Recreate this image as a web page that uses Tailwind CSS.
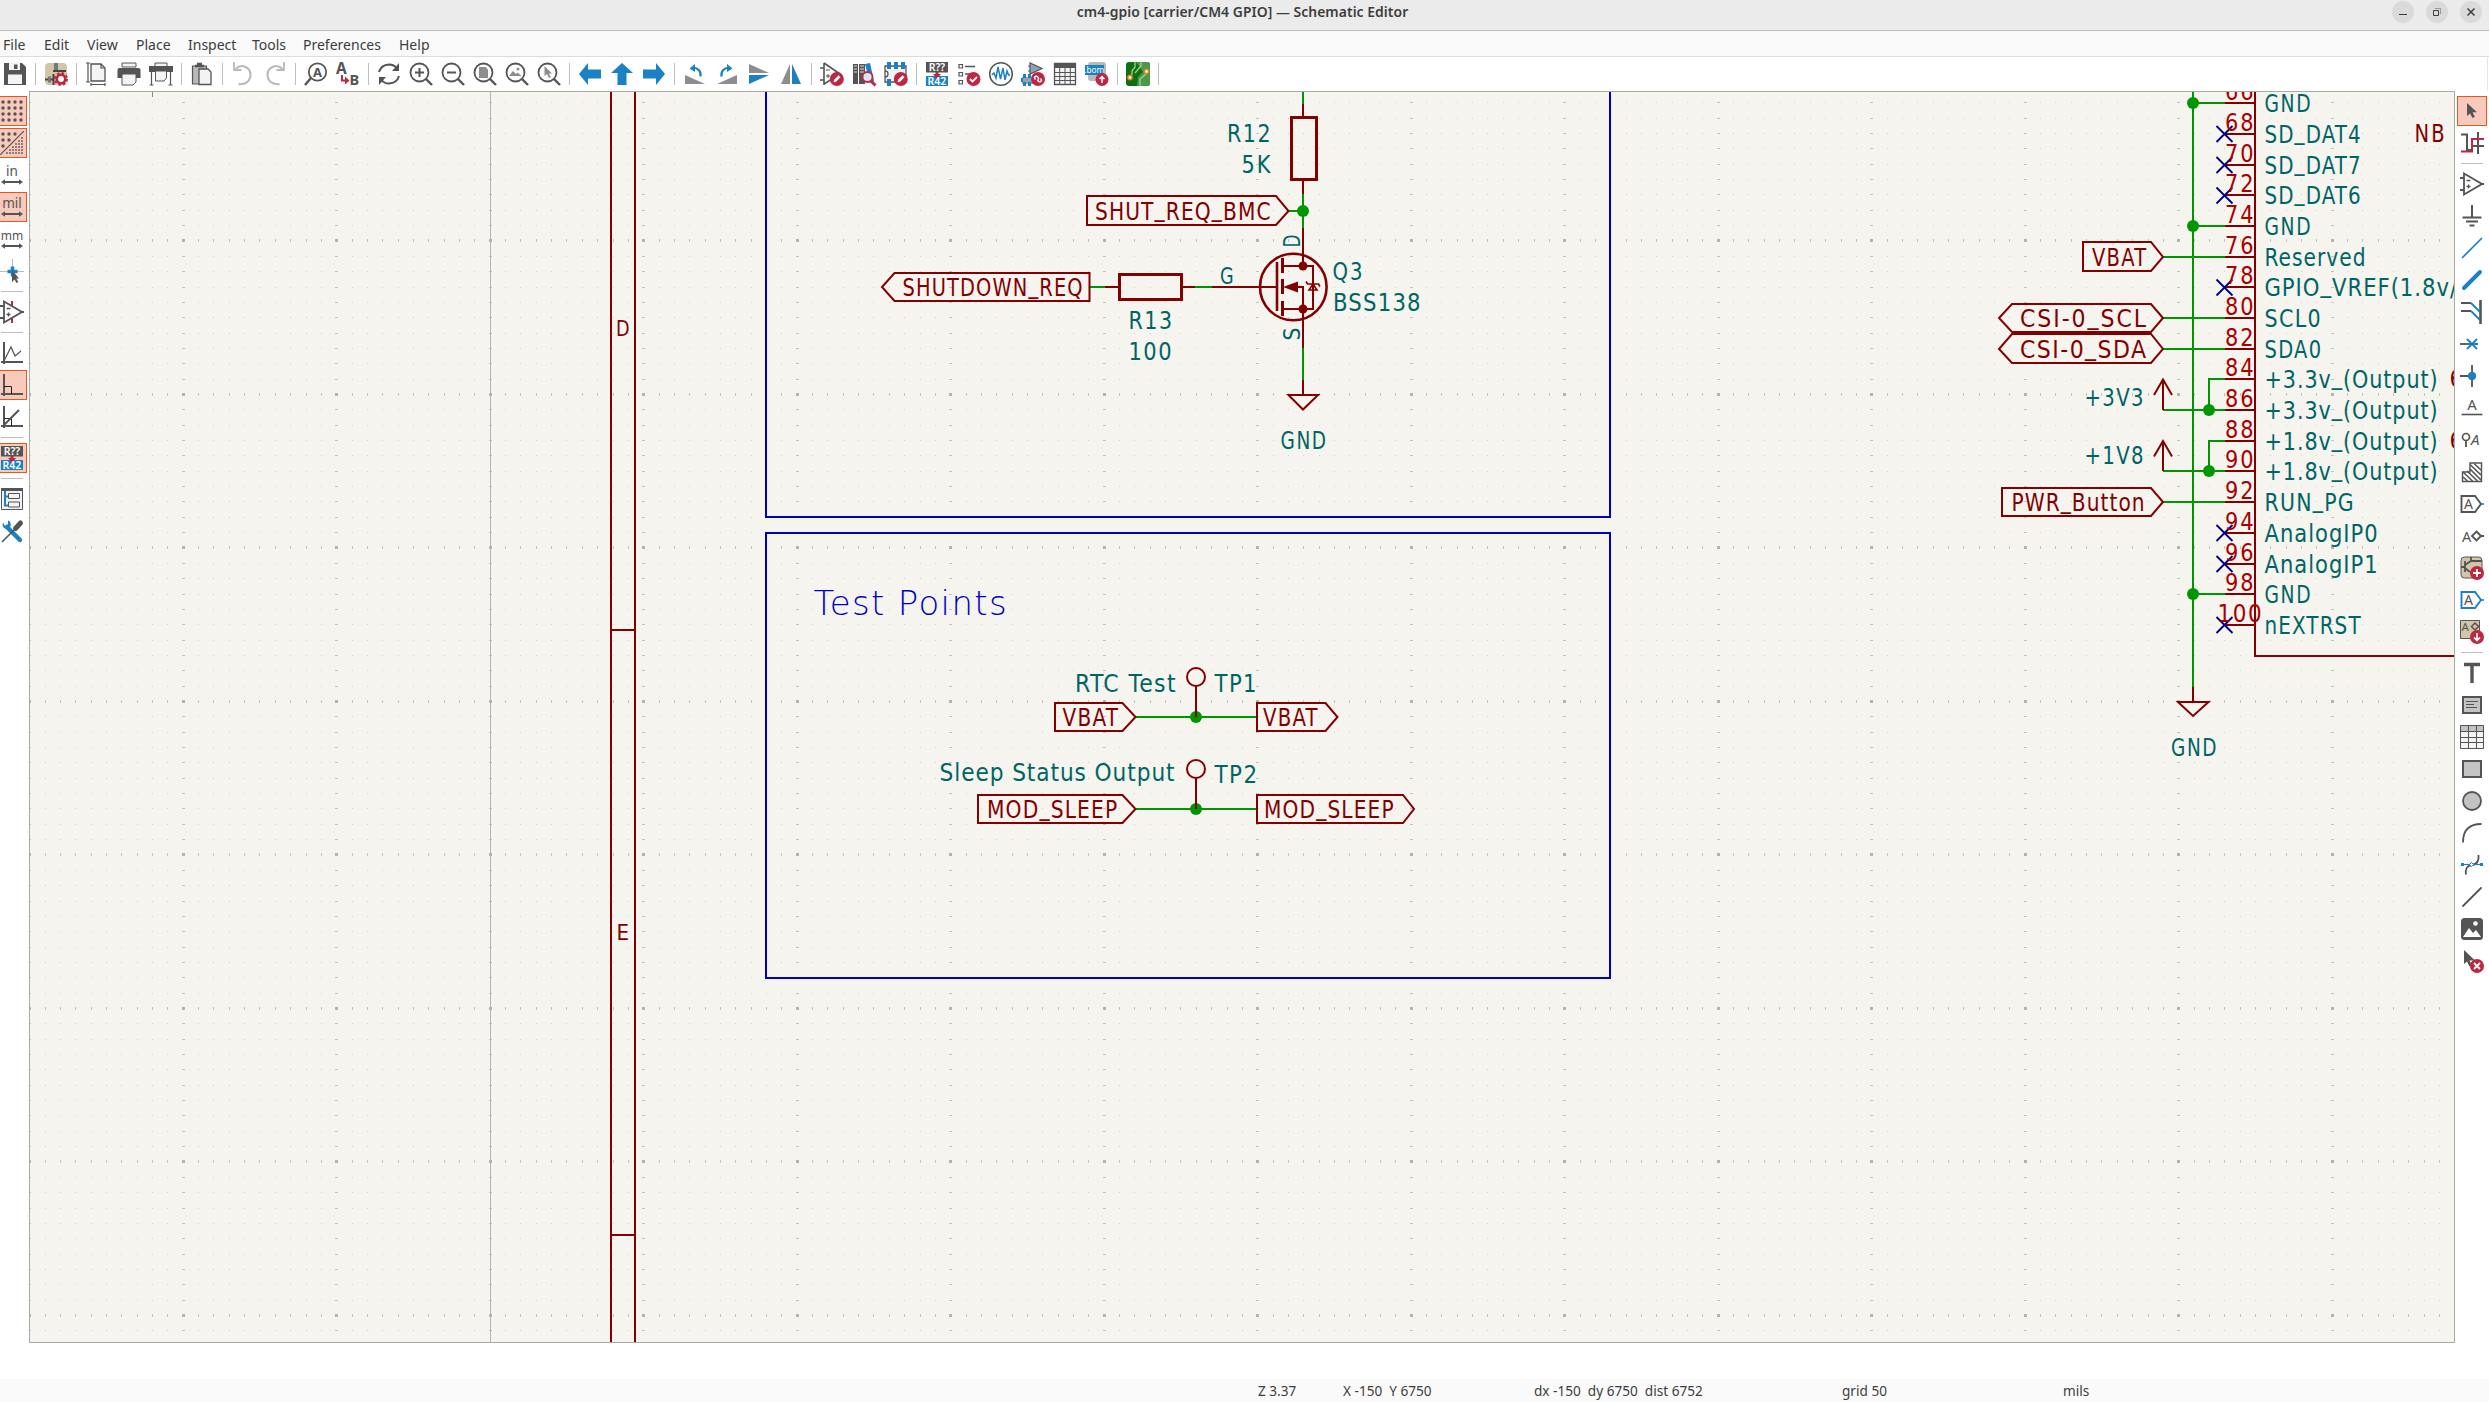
<!DOCTYPE html>
<html lang="en">
<head>
<meta charset="utf-8">
<title>cm4-gpio [carrier/CM4 GPIO] — Schematic Editor</title>
<script src="https://cdn.jsdelivr.net/npm/@tailwindcss/browser@4"></script>
</head>
<body class="flex h-screen w-screen flex-col overflow-hidden bg-white font-['Noto_Sans',sans-serif] text-[#3d3d3d]">

<svg width="0" height="0" class="absolute">
  <defs>
    <symbol id="opamp" viewBox="0 0 24 24"><path d="M4 1.5v21L22 12zM0 6h4M0 18h4M20 12h4" fill="none" stroke="#545454" stroke-width="1.8"/><path d="M6.500 8.500h4M6.500 14.500h4M8.500 12.500v4" stroke="#545454" stroke-width="1.300"/></symbol>
    <symbol id="annot" viewBox="0 0 24 24"><rect x="1" y="0" width="22" height="10.500" fill="#545454"/><rect x="1" y="14" width="22" height="10" fill="#1a81c4"/><path d="M10.500 10h3v2h2.500L12 17l-4-5h2.500z" fill="#bf2641"/><text x="12" y="9" font-size="10.500" font-weight="600" fill="#fff" text-anchor="middle" font-family="Noto Sans">R??</text><text x="12" y="22.800" font-size="10.500" font-weight="600" fill="#fff" text-anchor="middle" font-family="Noto Sans">R42</text></symbol>
    <symbol id="lens" viewBox="0 0 24 24"><circle cx="10.500" cy="10.500" r="9" fill="none" stroke="#545454" stroke-width="1.800"/><path d="M17 17l6 6" stroke="#545454" stroke-width="2.400"/></symbol>
    <symbol id="pencil" viewBox="0 0 24 24"><circle cx="16.800" cy="17" r="7" fill="#bf2641"/><path d="M13.500 20.300l.6-2.500 4.500-4.500 1.900 1.900-4.500 4.500z" fill="#fff"/></symbol>
    <symbol id="arrows" viewBox="0 0 24 24"><path d="M1 19l4-2.700V18h14v-1.700L23 19l-4 2.700V20H5v1.700z" fill="#545454"/></symbol>
    <symbol id="axes" viewBox="0 0 24 24"><path d="M4 1v22M1 21h22" stroke="#545454" stroke-width="2"/></symbol>
  </defs>
</svg>

<header class="relative flex h-[31px] shrink-0 items-start justify-center border-b border-[#bcbcbc] bg-[#ebebeb]">
  <h1 class="pt-[2px] pr-[4px] text-[13.900px] leading-5 font-semibold tracking-[0.05px] whitespace-nowrap">cm4-gpio [carrier/CM4 GPIO] — Schematic Editor</h1>
  <div class="absolute top-px right-[7px] flex gap-3">
    <svg class="size-[22px] rounded-full bg-[#dadada]" viewBox="0 0 22 22"><path d="M7 13.500h8" stroke="#3d3d3d"/></svg>
    <svg class="size-[22px] rounded-full bg-[#dadada]" viewBox="0 0 22 22"><path d="M7.500 9.500h5v5h-5z" fill="none" stroke="#3d3d3d"/><path d="M9 7.500h5.500V13" fill="none" stroke="#999"/></svg>
    <svg class="size-[22px] rounded-full bg-[#dadada]" viewBox="0 0 22 22"><path d="M7.500 7.500l7 7M14.500 7.500l-7 7" stroke="#3d3d3d" stroke-width="1.500"/></svg>
  </div>
</header>

<nav class="flex h-[26px] shrink-0 items-center gap-[17px] border-b border-[#dcdcdc] bg-[#fafafa] pt-px pl-[3px] text-[14px] whitespace-nowrap">
  <span class="w-6">File</span><span class="w-[26px]">Edit</span><span class="w-8">View</span><span class="w-[35px]">Place</span><span class="w-[47px]">Inspect</span><span class="w-[34px]">Tools</span><span class="w-[79px]">Preferences</span><span>Help</span>
</nav>

<div class="mr-px flex h-[34px] shrink-0 items-center gap-2 border-r border-[#e6e6e6] pl-[3px] [&>svg]:size-6 [&>svg]:shrink-0 [&>svg]:overflow-visible [&>i]:h-[22px] [&>i]:w-px [&>i]:bg-[#bdbdbd]">
  <svg viewBox="0 0 24 24"><path d="M1 1h18l4 4v18H1z" fill="#545454"/><path d="M6 1h11v7H6z" fill="#f3f3f3"/><path d="M11 2.500h3.500v4.500H11z" fill="#545454"/><path d="M5 12.500h14V22H5z" fill="#f3f3f3"/></svg>
  <i></i>
  <svg viewBox="0 0 24 24"><rect x="1" y="1" width="22" height="22" rx="4" fill="#d2c5a8"/><path d="M10 1h4v7h-4z" fill="#777"/><path d="M9 9h13M1 17.500h8M9.500 12v11" stroke="#444" stroke-width="2"/><path d="M4 14.500h3v6H4z" fill="#777"/><circle cx="17" cy="17" r="4.200" fill="#fff" stroke="#bf2641" stroke-width="2.600"/><circle cx="17" cy="17" r="6" fill="none" stroke="#bf2641" stroke-width="2" stroke-dasharray="2.400 2.300"/></svg>
  <i></i>
  <svg viewBox="0 0 24 24"><path d="M6 2h10l4 4v13H6z" fill="#f3f3f3" stroke="#545454" stroke-width="1.300"/><path d="M16 2v4h4M3 1v19M1 1h4M1 20h4M6 22.500h14M6 21v3M20 21v3" fill="none" stroke="#545454" stroke-width="1.200"/></svg>
  <svg viewBox="0 0 24 24"><path d="M5 1h14v4H5z" fill="#f3f3f3" stroke="#545454"/><path d="M2.500 6h19q2 0 2 2v8H.500V8q0-2 2-2z" fill="#545454"/><path d="M5 12h14v8l-3 3H5z" fill="#f3f3f3" stroke="#545454"/></svg>
  <svg viewBox="0 0 24 24"><path d="M6 1h12v4H6z" fill="#f3f3f3" stroke="#545454"/><path d="M0 4h24v6H0z" fill="#545454"/><path d="M6.500 9h11v7l-2.500 3H6.500z" fill="#f3f3f3" stroke="#545454"/><path d="M2.500 10v13M21.500 10v13M.500 23h4M19.500 23h4" stroke="#545454" stroke-width="1.200"/></svg>
  <i></i>
  <svg viewBox="0 0 24 24"><path d="M2.500 4h14v18h-14z" fill="#b9b9b9" stroke="#545454" stroke-width="1.200"/><path d="M5 4h9M7 2h5" stroke="#545454" stroke-width="2.600"/><path d="M9 7h9l3 3v12.500H9z" fill="#f3f3f3" stroke="#545454" stroke-width="1.300"/></svg>
  <i></i>
  <svg viewBox="0 0 24 24"><path d="M4.500 7q4-4 9-2.500 6 2 6 8.500 0 6-6 8.500-3 1-6 .500" fill="none" stroke="#b9b9b9" stroke-width="2"/><path d="M3 0v8h7.500" fill="none" stroke="#b9b9b9" stroke-width="1.800"/></svg>
  <svg viewBox="0 0 24 24"><path d="M19.500 7q-4-4-9-2.500-6 2-6 8.500 0 6 6 8.500 3 1 6 .500" fill="none" stroke="#b9b9b9" stroke-width="2"/><path d="M21 0v8h-7.500" fill="none" stroke="#b9b9b9" stroke-width="1.800"/></svg>
  <i></i>
  <svg viewBox="0 0 24 24"><circle cx="13.500" cy="10" r="8.700" fill="none" stroke="#545454" stroke-width="1.700"/><path d="M7 16l-6 7" stroke="#545454" stroke-width="2.400"/><text x="13.500" y="14.800" font-size="13" font-weight="700" text-anchor="middle" fill="#545454" font-family="Noto Sans">A</text></svg>
  <svg viewBox="0 0 24 24"><text x="0" y="12" font-size="15.500" font-weight="700" fill="#545454" font-family="Noto Sans">A</text><text x="13.500" y="23.300" font-size="14.500" font-weight="700" fill="#545454" font-family="Noto Sans">B</text><path d="M6 13v5.500h4" fill="none" stroke="#bf2641" stroke-width="2"/><path d="M9 14.500l4.500 4-4.500 4z" fill="#bf2641"/></svg>
  <i></i>
  <svg viewBox="0 0 24 24"><path d="M2 10q2-7 10-7.500 5 0 8 4M22 14q-2 7-10 7.500-5 0-8-4" fill="none" stroke="#545454" stroke-width="2"/><path d="M22 1v8h-7zM2 23v-8h7z" fill="#545454"/></svg>
  <svg viewBox="0 0 24 24"><use href="#lens"/><path d="M6 10.500h9M10.500 6v9" stroke="#545454" stroke-width="2"/></svg>
  <svg viewBox="0 0 24 24"><use href="#lens"/><path d="M6 10.500h9" stroke="#545454" stroke-width="2"/></svg>
  <svg viewBox="0 0 24 24"><use href="#lens"/><path d="M6 5h6.500l2.500 2.500V16H6z" fill="#8d8d8d"/></svg>
  <svg viewBox="0 0 24 24"><use href="#lens"/><path d="M4 14l4-5 3 3 1.500-1.500L16.500 14z" fill="#8d8d8d"/><circle cx="13" cy="7" r="1.500" fill="#8d8d8d"/></svg>
  <svg viewBox="0 0 24 24"><use href="#lens"/><path d="M7.500 4v10l2.500-2 2 4 1.800-1-2-3.500H15z" fill="#8d8d8d"/></svg>
  <i></i>
  <svg viewBox="0 0 24 24"><path d="M1 12L10 1v6.500h13v9H10V23z" fill="#1a81c4"/></svg>
  <svg viewBox="0 0 24 24"><path d="M12 1l11 10h-6.500v12h-9V11H1z" fill="#1a81c4"/></svg>
  <svg viewBox="0 0 24 24"><path d="M23 12L14 1v6.500H1v9h13V23z" fill="#1a81c4"/></svg>
  <i></i>
  <svg viewBox="0 0 24 24"><path d="M2 13v9h20z" fill="#8d8d8d"/><path d="M17.500 14.500q1-8-8-9" fill="none" stroke="#1a81c4" stroke-width="2.200"/><path d="M6.500 6.500L12 2v8z" fill="#1a81c4"/></svg>
  <svg viewBox="0 0 24 24"><path d="M22 13v9H2z" fill="#8d8d8d"/><path d="M6.500 14.500q-1-8 8-9" fill="none" stroke="#1a81c4" stroke-width="2.200"/><path d="M17.500 6.500L12 2v8z" fill="#1a81c4"/></svg>
  <svg viewBox="0 0 24 24"><path d="M2 2v9h20z" fill="#8d8d8d"/><path d="M2 22v-9h20z" fill="#1a81c4"/></svg>
  <svg viewBox="0 0 24 24"><path d="M11 2v20H2z" fill="#8d8d8d"/><path d="M13 2v20h9z" fill="#1a81c4"/></svg>
  <i></i>
  <svg viewBox="0 0 24 24"><path d="M4 1v22M4 1l16 11L4 22M0 6h4M0 18h4" fill="none" stroke="#545454" stroke-width="1.600"/><path d="M6 8h4M6 14h4M8 12v4" stroke="#545454"/><use href="#pencil"/></svg>
  <svg viewBox="0 0 24 24"><path d="M1 2h5v20H1zM7 2h6v20H7z" fill="#545454"/><path d="M2 4h3M2 7h3M2 10h3M8 4h4M8 7h4M8 10h4" stroke="#ddd"/><path d="M13 2l5-1 4 18-4 2z" fill="#1a81c4"/><circle cx="15.500" cy="15" r="5" fill="#d7e6f2" stroke="#bf2641" stroke-width="1.800"/><path d="M19 19l4.500 4.500" stroke="#bf2641" stroke-width="3"/></svg>
  <svg viewBox="0 0 24 24"><path d="M1 4v16h21V4zM1 9q3 0 3 3t-3 3" fill="#f3f3f3" stroke="#545454" stroke-width="1.300"/><path d="M3 0h4v7H3zM10 0h4v7h-4zM17 0h4v7h-4zM3 17h4v7H3z" fill="#1a81c4"/><use href="#pencil"/></svg>
  <i></i>
  <svg><use href="#annot"/></svg>
  <svg viewBox="0 0 24 24"><path d="M2 2.500h3.500V6H2zM2 10.500h3.500V14H2zM2 18.500h3.500V22H2z" fill="none" stroke="#545454" stroke-width="1.200"/><path d="M8 4.500h10M8 12h5" stroke="#545454" stroke-width="1.600"/><circle cx="16.500" cy="17" r="7" fill="#bf2641"/><path d="M13 17l2.500 2.500 4.500-4.500" fill="none" stroke="#fff" stroke-width="1.800"/></svg>
  <svg viewBox="0 0 24 24"><circle cx="12" cy="12" r="11.300" fill="#fff" stroke="#545454" stroke-width="1.500"/><path d="M3 13l2-2 2 5 2-11 2.500 12L14 6l2 12 2-9 1.500 4H21" fill="none" stroke="#1a81c4" stroke-width="1.500"/></svg>
  <svg viewBox="0 0 24 24"><path d="M9 1v11l12-5.500zM7 4h2M7 9h2" fill="#8fa3b8" stroke="#545454" stroke-width="1.200"/><path d="M1 15h12v7H1z" fill="#8fa3b8"/><path d="M2 12h3v4H2zM7 12h3v4H7zM2 20h3v4H2zM7 20h3v4H7zM0 16h2v4H0z" fill="#1a81c4"/><circle cx="17" cy="17" r="7" fill="#bf2641"/><path d="M14.500 17.500q-2-2 0-3t3 2l0 1M19.500 16.500q2 2 0 3t-3-2" fill="none" stroke="#fff" stroke-width="1.500"/></svg>
  <svg viewBox="0 0 24 24"><path d="M1.500 1.500h21v21h-21z" fill="#f3f3f3" stroke="#545454" stroke-width="1.300"/><path d="M1 1h22v5H1z" fill="#545454"/><path d="M1 10.500h22M1 14.500h22M1 18.500h22M6.700 6v17M12 6v17M17.300 6v17" stroke="#545454"/></svg>
  <svg viewBox="0 0 24 24"><rect x="3" y="0" width="18" height="19" rx="3" fill="#b9b9b9"/><path d="M0 3h19v10H0z" fill="#1a81c4"/><text x="9.300" y="11" font-size="8.300" fill="#fff" text-anchor="middle" font-family="Noto Sans">.bom</text><circle cx="17" cy="17.500" r="6.500" fill="#bf2641"/><path d="M17 21v-6M14.500 17l2.500-2.500 2.500 2.500" fill="none" stroke="#fff" stroke-width="1.500"/></svg>
  <i></i>
  <svg viewBox="0 0 24 24"><rect width="24" height="24" rx="3" fill="#0b7111"/><path d="M10 0h11q3 0 3 3v18q0 3-3 3H11l1-9 5-5z" fill="#4a9a4a"/><path d="M9 0v5l-3 4v4M15 0v4l-6 7M14 24v-7l6-5V9" fill="none" stroke="#a3cf95" stroke-width="1.300"/><circle cx="4" cy="15.500" r="2.200" fill="#fff" stroke="#e87b16" stroke-width="1.500"/><circle cx="20.500" cy="9.500" r="2.200" fill="#fff" stroke="#e87b16" stroke-width="1.500"/></svg>
  <i></i>
</div>

<main class="flex h-[1252px] shrink-0">
  <aside class="flex w-[29px] flex-col items-start gap-2 pt-2 [&>svg]:size-6 [&>svg]:shrink-0 [&>svg]:overflow-visible [&>i]:ml-px [&>i]:h-px [&>i]:w-[22px] [&>i]:bg-[#bdbdbd]">
    <div class="-m-[3px] size-[30px] border border-[#e95420] bg-[#f8cabc] p-[2px]"><svg class="size-6" viewBox="0 0 24 24"><path d="M3 3h19M3 9h19M3 15h19M3 21h19" stroke="#545454" stroke-width="3.400" stroke-linecap="round" stroke-dasharray="0 6"/></svg></div>
    <div class="-m-[3px] size-[30px] border border-[#e95420] bg-[#f8cabc] p-[2px]"><svg class="size-6" viewBox="0 0 24 24"><path d="M3 3h13M3 9h7M3 15h1" stroke="#545454" stroke-width="3.400" stroke-linecap="round" stroke-dasharray="0 6"/><path d="M0 24L24 0" stroke="#545454" stroke-width="1.200"/><path d="M21 7h2M18 10h5M15 13h8M12 16h11M9 19h14M6 22h17" stroke="#545454" stroke-opacity=".65" stroke-width="2" stroke-dasharray="2 1"/></svg></div>
    <svg viewBox="0 0 24 24"><text x="12" y="13" font-size="13.500" text-anchor="middle" fill="#545454" font-family="Noto Sans">in</text><use href="#arrows"/></svg>
    <div class="-m-[3px] size-[30px] border border-[#e95420] bg-[#f8cabc] p-[2px]"><svg class="size-6 overflow-visible" viewBox="0 0 24 24"><text x="12" y="13" font-size="13.500" text-anchor="middle" fill="#545454" font-family="Noto Sans">mil</text><use href="#arrows"/></svg></div>
    <svg viewBox="0 0 24 24"><text x="12" y="13" font-size="12" text-anchor="middle" fill="#545454" font-family="Noto Sans">mm</text><use href="#arrows"/></svg>
    <svg viewBox="0 0 24 24"><path d="M12.500 0v22M0 12.500h24" stroke="#b9b9b9"/><path d="M12.500 7.500v10M7.500 12.500h10" stroke="#1a81c4" stroke-width="3.500"/><path d="M12 11v12l2.500-2.500 2 3.500 1.800-1-2-3.500H19z" fill="#545454"/></svg>
    <i></i>
    <svg viewBox="0 0 24 24"><path d="M12 1v5M12 18v5" stroke="#bf2641" stroke-width="2"/><use href="#opamp"/></svg>
    <i></i>
    <svg viewBox="0 0 24 24"><use href="#axes"/><path d="M4 20l7-14 4 9 6-5" fill="none" stroke="#545454" stroke-width="1.200"/></svg>
    <div class="-m-[3px] size-[30px] border border-[#e95420] bg-[#f8cabc] p-[2px]"><svg class="size-6" viewBox="0 0 24 24"><use href="#axes"/><path d="M4 13.500h7.500V21" fill="none" stroke="#222"/></svg></div>
    <svg viewBox="0 0 24 24"><use href="#axes"/><path d="M4 13.500h7.500V21" fill="none" stroke="#222"/><path d="M4 20L19 5" stroke="#545454" stroke-width="2"/></svg>
    <i></i>
    <div class="-m-[3px] size-[30px] border border-[#e95420] bg-[#f8cabc] p-[2px]"><svg class="size-6"><use href="#annot"/></svg></div>
    <i></i>
    <svg viewBox="0 0 24 24"><path d="M1.500 2h21v20.500h-21z" fill="#f3f3f3" stroke="#545454"/><path d="M1 1h22v3H1z" fill="#545454"/><path d="M5 4v14.500h4M5 9.500h4" fill="none" stroke="#1a81c4" stroke-width="2"/><path d="M8.500 6.500h11v5h-11zM8.500 15h11v5h-11z" fill="#f3f3f3" stroke="#545454"/></svg>
    <svg viewBox="0 0 24 24"><path d="M7 8l13 13" stroke="#1a81c4" stroke-width="4.500" stroke-linecap="round"/><path d="M3 3.500q-1.500 4 2 6t5-1 0-6l-2-1v4L5 7z" fill="#1a81c4"/><path d="M2 23L14 11" stroke="#545454" stroke-width="1.600"/><path d="M15.500 9.500L20.500 4" stroke="#545454" stroke-width="5" stroke-linecap="round"/></svg>
  </aside>

  <section class="flex-1 overflow-hidden border border-[#a9aba6] bg-[#f5f4ef]">
    <svg id="sheet" class="block h-[1250px] w-full" viewBox="30 92 2424 1250" fill="none" stroke-width="2">
      <path id="dots" fill="#cfcfcb" shape-rendering="crispEdges"/>
      <path id="ticks" fill="#c3c3c0" shape-rendering="crispEdges"/>
      <path id="majors" fill="#b3b3b1" shape-rendering="crispEdges"/>
      <path d="M490.500 92v1250" stroke="#b4b4b4" stroke-width="1"/>
      <path d="M152.500 92v5" stroke="#8a8a86" stroke-width="1"/>

      <!-- sheet frame -->
      <path d="M611 92v1250M635 92v1250M611 630h24M611 1235h24" stroke="#840000" shape-rendering="crispEdges"/>
      <!-- block outlines -->
      <path d="M766 92v425h844V92M766 533h844v445H766z" stroke="#0000c2" shape-rendering="crispEdges"/>

      <!-- wires -->
      <g stroke="#009600" shape-rendering="crispEdges">
        <path d="M1303 92v12M1303 194v34M1288 211h15M1303 348v32M1089 287h16M1195 287h17"/>
        <path d="M1135 717h122M1135 809h122"/>
        <path d="M2193 92v595M2193 103h32M2193 226h32M2193 594h32M2163 257h62M2163 318h62M2163 349h62M2163 502h62M2163 410h62M2209 410v-31h16M2163 471h62M2209 471v-30h16"/>
      </g>
      <g fill="#009600">
        <circle cx="1303" cy="211" r="6"/><circle cx="1196" cy="717" r="6"/><circle cx="1196" cy="809" r="6"/>
        <circle cx="2193" cy="103" r="6"/><circle cx="2193" cy="226" r="6"/><circle cx="2193" cy="594" r="6"/><circle cx="2209" cy="410" r="6"/><circle cx="2209" cy="471" r="6"/>
      </g>

      <!-- component bodies and pins -->
      <g stroke="#840000">
        <path d="M1303 104v12M1303 181v13M1303 228v38M1303 309v39M1303 380v15M1105 287h14M1183 287h12M1212 287h65"/>
        <path d="M1291.500 117.500h25v62h-25zM1119.500 274.500h62v25h-62z" stroke-width="3"/>
        <circle cx="1293.300" cy="287" r="33.300" stroke-width="2.600"/>
        <path d="M1277 262v49" stroke-width="2.600"/>
        <path d="M1282.500 258v15M1282.500 279v15M1282.500 301v15" stroke-width="3"/>
        <path d="M1282 266h31v43h-31M1298 287h5v22"/>
        <path d="M1306 281.500l1.500 2.500h11l1.500 2.500M1313 284l-4 6h8z" stroke-width="1.600"/>
        <path d="M1288.500 395h29.500L1303 409.500z"/>
        <path d="M1196 686v31M1196 778v31"/>
        <circle cx="1196" cy="677" r="9"/><circle cx="1196" cy="769" r="9"/>
        <path d="M2193 687v15M2178 702h30.500L2193 716z"/>
        <path d="M2255 92v564h200"/>
        <path d="M2163 410v-30M2154 395l9-15.500 9 15.500M2163 471v-30M2154 456.500l9-15.500 9 15.500"/>
        <path d="M2225 103h30M2225 134h30M2225 165h30M2225 195h30M2225 226h30M2225 257h30M2225 287h30M2225 318h30M2225 349h30M2225 379h30M2225 410h30M2225 441h30M2225 471h30M2225 502h30M2225 533h30M2225 564h30M2225 594h30M2225 625h30"/>
      </g>
      <g fill="#840000"><circle cx="1303" cy="266" r="4.500"/><circle cx="1303" cy="309" r="4.500"/><path d="M1283 287l15-5.500v11z"/></g>

      <!-- hierarchical label outlines -->
      <g stroke="#840000">
        <path d="M1087 196h189l12.500 15-12.500 14h-189zM1089.500 273H894.500L882 287l12.500 14h195z"/>
        <path d="M2083 242h68l12 15-12 14h-68zM2012 304h139l12 14-12 14H2012l-13-14zM2012 334h139l12 15-12 14H2012l-13-14zM2002 488h149l12 14-12 14H2002z"/>
        <path d="M1055 703h67.500l13 14-13 14H1055zM1257 703h68.500l12 14-12 14H1257zM978 795h144.500l13 14-13 14H978zM1257 795h146l11 14-11 14h-146z"/>
      </g>

      <!-- no-connect flags -->
      <path d="M2216.500 126l16 16m0-16l-16 16M2216.500 157l16 16m0-16l-16 16M2216.500 187.500l16 16m0-16l-16 16M2216.500 279.500l16 16m0-16l-16 16M2216.500 525l16 16m0-16l-16 16M2216.500 556l16 16m0-16l-16 16M2216.500 617l16 16m0-16l-16 16" stroke="#000084" stroke-width="1.800"/>

      <g id="labels" font-family="'DejaVu Sans Condensed','DejaVu Sans',sans-serif"></g>
    </svg>
  </section>

  <aside class="flex w-[34px] flex-col items-start gap-2 pt-2 pl-[5px] [&>svg]:size-6 [&>svg]:shrink-0 [&>svg]:overflow-visible [&>i]:ml-px [&>i]:h-px [&>i]:w-[22px] [&>i]:bg-[#bdbdbd]">
    <div class="-m-[3px] size-[30px] border border-[#e95420] bg-[#f8cabc] p-[2px]"><svg class="size-6" viewBox="0 0 24 24"><path d="M7 4v13l3-2.500 2.500 4.500 2.300-1.200-2.300-4.500H17z" fill="#545454"/></svg></div>
    <svg viewBox="0 0 24 24"><path d="M1 3.500h6V19h5M18 1v22M13 15h11" fill="none" stroke="#545454" stroke-width="2"/><path d="M1 20.500h11V8h12" fill="none" stroke="#bf2641" stroke-width="2"/></svg>
    <i></i>
    <svg><use href="#opamp"/></svg>
    <svg viewBox="0 0 24 24"><path d="M12 1v12M2.500 13.500h19M6 17.500h12M9.500 21.500h5" stroke="#545454" stroke-width="2"/></svg>
    <svg viewBox="0 0 24 24"><path d="M2.500 21.500l19-19" stroke="#1a81c4" stroke-width="1.700" stroke-linecap="round"/></svg>
    <svg viewBox="0 0 24 24"><path d="M4 20L20 4" stroke="#1a81c4" stroke-width="4" stroke-linecap="round"/></svg>
    <svg viewBox="0 0 24 24"><path d="M20.500 0v24" stroke="#545454" stroke-width="2.600"/><path d="M1 3h10M1 11h10" stroke="#545454" stroke-width="1.800"/><path d="M11 3l9 9M11 11l9 9" stroke="#1a81c4" stroke-width="1.800"/></svg>
    <svg viewBox="0 0 24 24"><path d="M0 12h12" stroke="#545454" stroke-width="1.800"/><path d="M7 7l10 10M17 7L7 17M12 12h6" stroke="#1a81c4" stroke-width="1.800"/></svg>
    <svg viewBox="0 0 24 24"><path d="M0 12h12M12 1v22" stroke="#545454" stroke-width="1.800"/><circle cx="12" cy="12" r="4.200" fill="#1a81c4"/></svg>
    <svg viewBox="0 0 24 24"><text x="12" y="14" font-size="15" text-anchor="middle" fill="#545454" font-family="Noto Sans">A</text><path d="M1.500 18.500h21" stroke="#545454" stroke-width="1.600"/></svg>
    <svg viewBox="0 0 24 24"><circle cx="6" cy="9" r="3.500" fill="none" stroke="#545454" stroke-width="1.700"/><path d="M6 12v7" stroke="#545454" stroke-width="1.800"/><text x="11" y="17" font-size="15" font-style="italic" fill="#545454" font-family="Noto Sans">A</text></svg>
    <svg viewBox="0 0 24 24"><path d="M2.500 12H10V3h11.500v18.500h-19z" fill="none" stroke="#545454" stroke-width="1.400"/><path d="M3 17l4.500 4M3 12l9.500 9M7 11l10.500 10M10 9l11 11M10 4.500L21 15M14 3.500l7 6.500" stroke="#545454" stroke-width="1.600"/></svg>
    <svg viewBox="0 0 24 24"><path d="M1.500 4H15l6 8-6 8H1.500z" fill="none" stroke="#545454" stroke-width="1.900"/><path d="M21 12h3" stroke="#1a81c4" stroke-width="1.600"/><text x="8.500" y="17" font-size="14" text-anchor="middle" fill="#545454" font-family="Noto Sans">A</text></svg>
    <svg viewBox="0 0 24 24"><text x="2" y="17.500" font-size="14.500" fill="#545454" font-family="Noto Sans">A</text><path d="M16.500 7.500l4.500 4.500-4.500 4.500L12 12zM21 12h3" fill="none" stroke="#545454" stroke-width="1.900"/></svg>
    <svg viewBox="0 0 24 24"><rect x="1" y="1" width="21" height="21" rx="3.500" fill="#d2c5a8" stroke="#545454"/><path d="M1 11h4M5 5v11M5 9l6-4h11M11 1v4M5 12l5 4" fill="none" stroke="#545454" stroke-width="1.800"/><circle cx="17" cy="17" r="7" fill="#bf2641"/><path d="M17 13v8M13 17h8" stroke="#fff" stroke-width="1.800"/></svg>
    <svg viewBox="0 0 24 24"><path d="M1.500 4H15l6 8-6 8H1.500z" fill="none" stroke="#1a81c4" stroke-width="1.900"/><path d="M21 12h3" stroke="#1a81c4" stroke-width="1.600"/><text x="8.500" y="17" font-size="14" text-anchor="middle" fill="#545454" font-family="Noto Sans">A</text></svg>
    <svg viewBox="0 0 24 24"><path d="M.500.500h19v18H.500z" fill="#d2c5a8" stroke="#545454"/><text x="1.500" y="10.500" font-size="11.500" fill="#545454" font-family="Noto Sans">A</text><path d="M15 3l3.500 3.500L15 10l-3.500-3.500z" fill="none" stroke="#545454" stroke-width="1.500"/><circle cx="17" cy="17" r="7" fill="#bf2641"/><path d="M17 13v7M14 17.500l3 3 3-3" fill="none" stroke="#fff" stroke-width="1.700"/></svg>
    <i></i>
    <svg viewBox="0 0 24 24"><path d="M4 3.500h16M12 3.500V22" stroke="#545454" stroke-width="3.400"/></svg>
    <svg viewBox="0 0 24 24"><path d="M3 4h18v16H3z" fill="#c3c3c3" stroke="#545454" stroke-width="2"/><path d="M6 8.500h12M6 11.500h8M6 14.500h11" stroke="#545454" stroke-width="1.200"/></svg>
    <svg viewBox="0 0 24 24"><path d="M.500.500h23v23H.500z" fill="#f3f3f3"/><path d="M.500.500h23v6H.500z" fill="#c3c3c3"/><path d="M.500.500h23v23H.500zM.500 6.500h23M.500 12.500h23M.500 17.500h23M8.500.500v23M16.500.500v23" fill="none" stroke="#545454"/></svg>
    <svg viewBox="0 0 24 24"><path d="M3 4h18v16H3z" fill="#c3c3c3" stroke="#545454" stroke-width="2"/></svg>
    <svg viewBox="0 0 24 24"><circle cx="12" cy="12" r="9" fill="#c3c3c3" stroke="#545454" stroke-width="1.800"/></svg>
    <svg viewBox="0 0 24 24"><path d="M3 21.500Q3 3 21.500 3" fill="none" stroke="#545454" stroke-width="1.800"/></svg>
    <svg viewBox="0 0 24 24"><path d="M6 21.500Q4.500 13 12 12t6.500-10" fill="none" stroke="#545454" stroke-width="1.800"/><path d="M2 11.500h20" stroke="#1a81c4" stroke-width="1.200"/><path d="M1 10h3v3H1zM20 10h3v3h-3z" fill="#1a81c4"/><path d="M11.500 9.500l2 2-2 2-2-2z" fill="#fff" stroke="#1a81c4"/></svg>
    <svg viewBox="0 0 24 24"><path d="M3 21L21 3" stroke="#545454" stroke-width="1.800" stroke-linecap="round"/></svg>
    <svg viewBox="0 0 24 24"><rect x="1" y="1" width="22" height="22" rx="3.500" fill="#545454"/><path d="M3 20l6-9 4 5 3-3 5 7z" fill="#fff"/><circle cx="15.500" cy="6.500" r="2.300" fill="#fff"/></svg>
    <svg viewBox="0 0 24 24"><path d="M4 1v14l3-2.500 2.500 5 2.500-1.200-2.500-4.800H15z" fill="#545454"/><circle cx="17" cy="17" r="7" fill="#bf2641"/><path d="M14 14l6 6M20 14l-6 6" stroke="#fff" stroke-width="1.800"/></svg>
  </aside>
</main>

<footer class="mt-9 flex h-[23px] shrink-0 items-center bg-[#fafafa] pl-[1258px] text-[13.600px] leading-[23px] whitespace-pre">
  <span class="w-[85px]">Z 3.37</span><span class="w-[191px]">X -150  Y 6750</span><span class="w-[308px]">dx -150  dy 6750  dist 6752</span><span class="w-[221px]">grid 50</span><span>mils</span>
</footer>

<script>
  // Dot grid: one dot per 50 mil, heavier marks on every tenth line.
  const P = 15.35;
  let dots = '', ticks = '', majors = '';
  for (let i = -10; i < 149; i++) {
    const x = Math.floor(183.2 + P * i), mx = i % 10 === 0;
    if (x < 28 || x > 2455) continue;
    for (let j = -9; j < 73; j++) {
      const y = Math.floor(240.98 + P * j), my = j % 10 === 0;
      if (mx && my) majors += `M${x - 1} ${y - 1}h3v3h-3z`;
      else if (mx) ticks += `M${x - 1} ${y}h3v1h-3z`;
      else if (my) ticks += `M${x} ${y - 1}h1v3h-1z`;
      else dots += `M${x} ${y}h1v1h-1z`;
    }
  }
  document.getElementById('dots').setAttribute('d', dots);
  document.getElementById('ticks').setAttribute('d', ticks);
  document.getElementById('majors').setAttribute('d', majors);

  // Sheet texts: [string, left, right, baseline, colour, size, weight]
  const RED = '#840000', TEAL = '#006464', NUM = '#a90000', BLUE = '#0000c2';
  const texts = [
    ['R12', 1228.5, 1269.5, 142, TEAL], ['5K', 1243, 1269.5, 172.500, TEAL],
    ['SHUT_REQ_BMC', 1096.5, 1269.5, 219.500, RED], ['SHUTDOWN_REQ', 904, 1081.5, 296, RED],
    ['G', 1221.5, 1232.5, 284, TEAL, 22.5], ['R13', 1130, 1171, 329, TEAL], ['100', 1130, 1170.5, 359.5, TEAL],
    ['Q3', 1334, 1361.5, 280, TEAL], ['BSS138', 1334.5, 1419.5, 311, TEAL], ['GND', 1282, 1325, 449, TEAL],
    ['D', 617.5, 628.5, 335.5, RED, 22], ['E', 618, 628, 940, RED, 22],
    ['Test Points', 815, 1005.5, 615, BLUE, 34, 200],
    ['RTC Test', 1076.5, 1174.5, 691.5, TEAL], ['TP1', 1216, 1255.5, 691.5, TEAL],
    ['VBAT', 1064, 1117, 726, RED], ['VBAT', 1264.5, 1316.5, 726, RED],
    ['Sleep Status Output', 941, 1173.5, 780.5, TEAL], ['TP2', 1216, 1256, 783, TEAL],
    ['MOD_SLEEP', 988.5, 1116, 818, RED], ['MOD_SLEEP', 1265.5, 1392.5, 818, RED],
    ['VBAT', 2093.500, 2145, 266, RED], ['CSI-0_SCL', 2021.5, 2145, 327, RED], ['CSI-0_SDA', 2021.5, 2145, 358, RED],
    ['+3V3', 2086, 2142.5, 405.5, TEAL], ['+1V8', 2086, 2142.5, 464, TEAL], ['PWR_Button', 2013, 2143.5, 511, RED],
    ['GND', 2172.5, 2215.5, 755.5, TEAL], ['NB', 2416, 2443.5, 142, RED],
    ['6', 2451, 2462, 387, RED], ['6', 2451, 2462, 449, RED]
  ];
  const pins = [
    [66, 103, 'GND', 2309.5], [68, 134, 'SD_DAT4', 2359.5], [70, 165, 'SD_DAT7', 2359.5], [72, 195, 'SD_DAT6', 2359.5],
    [74, 226, 'GND', 2309.5], [76, 257, 'Reserved', 2364.5], [78, 287, 'GPIO_VREF(1.8v/', 2456], [80, 318, 'SCL0', 2319.5],
    [82, 349, 'SDA0', 2320], [84, 379, '+3.3v_(Output)', 2436.5], [86, 410, '+3.3v_(Output)', 2436.5], [88, 441, '+1.8v_(Output)', 2436.5],
    [90, 471, '+1.8v_(Output)', 2436.5], [92, 502, 'RUN_PG', 2352.5], [94, 533, 'AnalogIP0', 2376.5], [96, 564, 'AnalogIP1', 2376.5],
    [98, 594, 'GND', 2309.5], [100, 625, 'nEXTRST', 2359.5]
  ];
  for (const [n, y, name, right] of pins) {
    texts.push([name, 2266, right, y + 8.5, TEAL]);
    texts.push([String(n), n === 100 ? 2219 : 2226.5, n === 100 ? 2260.5 : 2252.5, y - 3, NUM]);
  }

  const layer = document.getElementById('labels');
  const place = (str, x, y, w, color, size, weight, rot = 0) => {
    const t = document.createElementNS('http://www.w3.org/2000/svg', 'text');
    t.setAttribute('font-size', size);
    t.setAttribute('font-weight', weight);
    if (weight < 400) t.setAttribute('font-family', "'DejaVu Sans Light','DejaVu Sans ExtraLight','DejaVu Sans',sans-serif");
    t.setAttribute('fill', color);
    t.textContent = str;
    layer.append(t);
    // Narrow the glyphs a little more than needed, then track them out to the full width.
    const ratio = w / t.getComputedTextLength();
    const sx = str.length > 1 ? Math.min(ratio * 0.93, 1.02) : ratio;
    t.setAttribute('transform', `translate(${x} ${y}) rotate(${rot}) scale(${sx} 1)`);
    if (str.length > 1) { t.setAttribute('textLength', w / sx); t.setAttribute('lengthAdjust', 'spacing'); }
    // The underscore sits right under the baseline.
    if (str.includes('_')) {
      let lifted = false;
      t.setAttribute('dy', [...str].map(c => {
        const lift = c === '_';
        const d = lift === lifted ? 0 : lift ? -3.5 : 3.5;
        lifted = lift;
        return d;
      }).join(' '));
    }
  };
  for (const [str, l, r, y, color, size = 24, weight = 400] of texts)
    place(str, l - 1.5, y, r - l + 2.6, color, size, weight);
  place('D', 1300, 247.5, 13, TEAL, 22.5, 400, -90);
  place('S', 1300, 340.5, 13, TEAL, 22.5, 400, -90);
</script>
</body>
</html>
